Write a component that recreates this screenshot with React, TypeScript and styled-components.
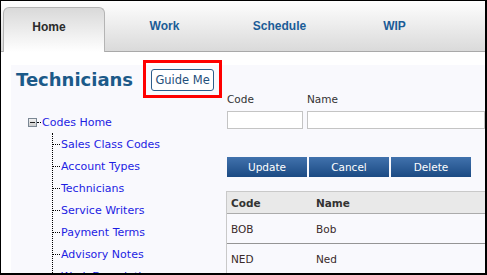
import styled, { createGlobalStyle } from "styled-components";

const GlobalStyle = createGlobalStyle`
  html, body {
    margin: 0;
    padding: 0;
    background: #fff;
  }
  body {
    font-family: "DejaVu Sans", Verdana, sans-serif;
  }
`;

const tabs = ["Home", "Work", "Schedule", "WIP"];

const codeLinks = [
  "Sales Class Codes",
  "Account Types",
  "Technicians",
  "Service Writers",
  "Payment Terms",
  "Advisory Notes",
  "Work Description",
  "Labor Rates",
];

const rows = [
  { code: "BOB", name: "Bob" },
  { code: "NED", name: "Ned" },
];

function ExpandBox() {
  return (
    <svg width="9" height="9" viewBox="0 0 9 9">
      <defs>
        <linearGradient id="eb" x1="0" y1="0" x2="0" y2="1">
          <stop offset="0" stopColor="#f4f4f4" />
          <stop offset="1" stopColor="#c9c9c9" />
        </linearGradient>
      </defs>
      <rect x="0.5" y="0.5" width="8" height="8" fill="url(#eb)" stroke="#7b8794" />
      <rect x="2" y="4" width="5" height="1" fill="#222" />
    </svg>
  );
}

function App() {
  return (
    <>
      <GlobalStyle />
      <Frame>
        <TabBar>
          {tabs.map((t, i) => (
            <Tab key={t} $active={i === 0}>
              {t}
            </Tab>
          ))}
        </TabBar>
        <Content>
          <Panel>
            <LeftCol>
              <TitleRow>
                <Title>Technicians</Title>
                <GuideWrap>
                  <GuideButton>Guide Me</GuideButton>
                </GuideWrap>
              </TitleRow>
              <Tree>
                <RootRow>
                  <ExpandBox />
                  <Connector />
                  <TreeLink>Codes Home</TreeLink>
                </RootRow>
                <Children>
                  {codeLinks.map((l) => (
                    <ChildRow key={l}>
                      <TreeLink>{l}</TreeLink>
                    </ChildRow>
                  ))}
                </Children>
              </Tree>
            </LeftCol>
            <RightCol>
              <FieldGrid>
                <Label>Code</Label>
                <Label>Name</Label>
                <Input />
                <Input />
              </FieldGrid>
              <ButtonRow>
                <ActionButton>Update</ActionButton>
                <ActionButton>Cancel</ActionButton>
                <ActionButton>Delete</ActionButton>
              </ButtonRow>
              <Table>
                <HeaderRow>
                  <HeadCell>Code</HeadCell>
                  <HeadCell>Name</HeadCell>
                </HeaderRow>
                {rows.map((r) => (
                  <BodyRow key={r.code}>
                    <Cell>{r.code}</Cell>
                    <Cell>{r.name}</Cell>
                  </BodyRow>
                ))}
              </Table>
            </RightCol>
          </Panel>
        </Content>
      </Frame>
    </>
  );
}

const Frame = styled.div`
  width: 487px;
  height: 275px;
  box-sizing: border-box;
  border-style: solid;
  border-color: #000;
  border-width: 1px 2px 2px 1px;
  display: flex;
  flex-direction: column;
  overflow: hidden;
`;

const TabBar = styled.div`
  height: 50px;
  flex: none;
  display: flex;
  align-items: flex-end;
  padding-left: 2px;
  border-bottom: 1px solid #a9a9a9;
  background: linear-gradient(#fefefe, #dadada);
`;

const Tab = styled.div<{ $active?: boolean }>`
  box-sizing: border-box;
  height: ${(p) => (p.$active ? "45px" : "44px")};
  width: ${(p) => (p.$active ? "102px" : "115px")};
  margin-right: ${(p) => (p.$active ? "2px" : "0")};
  margin-bottom: ${(p) => (p.$active ? "-1px" : "0")};
  padding-right: ${(p) => (p.$active ? "10px" : "0")};
  line-height: 38px;
  text-align: center;
  font-family: "Liberation Sans", Arial, sans-serif;
  font-weight: bold;
  font-size: 12px;
  color: ${(p) => (p.$active ? "#2b2b2b" : "#1b5c97")};
  border: ${(p) => (p.$active ? "1px solid #b4b4b4" : "none")};
  border-bottom: none;
  border-radius: 6px 6px 0 0;
  background: ${(p) =>
    p.$active ? "linear-gradient(#d9d9d9, #ffffff)" : "transparent"};
`;

const Content = styled.div`
  flex: 1;
  min-height: 0;
  padding: 13px 0 0 10px;
  background: #fff;
`;

const Panel = styled.div`
  height: 100%;
  background: #f9f9fd;
  display: grid;
  grid-template-columns: 216px 1fr;
`;

const LeftCol = styled.div`
  padding: 4px 0 0 5px;
`;

const TitleRow = styled.div`
  display: flex;
  align-items: center;
  gap: 18px;
  height: 22px;
`;

const Title = styled.h1`
  margin: 0;
  font-size: 18px;
  line-height: 22px;
  font-weight: bold;
  color: #1c5a89;
  white-space: nowrap;
`;

const GuideWrap = styled.span`
  position: relative;
  display: inline-flex;

  &::after {
    content: "";
    position: absolute;
    top: -9px;
    left: -8px;
    right: -8px;
    bottom: -7px;
    border: 3px solid #f00;
    pointer-events: none;
  }
`;

const GuideButton = styled.button`
  box-sizing: border-box;
  width: 63px;
  height: 22px;
  padding: 0;
  border: 1px solid #2d5e8b;
  border-radius: 3px;
  background: #fff;
  color: #1f4f7b;
  font-family: "DejaVu Sans", Verdana, sans-serif;
  font-size: 11.5px;
`;

const Tree = styled.div`
  margin-top: 20px;
  padding-left: 12px;
  font-size: 11px;
`;

const RootRow = styled.div`
  display: flex;
  align-items: center;
  height: 22px;
`;

const Connector = styled.span`
  width: 4px;
  border-top: 1px dotted #000;
  margin-right: 1px;
`;

const TreeLink = styled.span`
  color: #1d1de3;
  white-space: nowrap;
`;

const Children = styled.div`
  margin-left: 24px;
  border-left: 1px dotted #000;
`;

const ChildRow = styled.div`
  display: flex;
  align-items: center;
  height: 22px;

  &::before {
    content: "";
    width: 7px;
    border-top: 1px dotted #000;
    margin-right: 1px;
  }
`;

const RightCol = styled.div`
  padding-top: 28px;
  font-size: 10.5px;
  color: #333;
`;

const FieldGrid = styled.div`
  display: grid;
  grid-template-columns: 76px 178px;
  column-gap: 4px;
  row-gap: 5px;
`;

const Label = styled.div`
  line-height: 13px;
`;

const Input = styled.div`
  box-sizing: border-box;
  height: 18px;
  background: #fff;
  border: 1px solid #c4c4c4;
`;

const ButtonRow = styled.div`
  display: flex;
  gap: 2px;
  margin-top: 28px;
`;

const ActionButton = styled.button`
  width: 80px;
  height: 20px;
  padding: 0;
  border: none;
  background: linear-gradient(#4172ad, #1b4a83);
  color: #fff;
  font-family: "DejaVu Sans", Verdana, sans-serif;
  font-size: 10.5px;
`;

const Table = styled.div`
  margin: 14px 0 0 -1px;
  border-left: 1px solid #c9c9c9;
  border-top: 1px solid #c9c9c9;
`;

const HeaderRow = styled.div`
  display: grid;
  grid-template-columns: 85px 1fr;
  height: 21px;
  align-items: center;
  background: #e9e9e9;
  border-bottom: 1px solid #ababab;
`;

const HeadCell = styled.div`
  padding-left: 4px;
  font-weight: bold;
  color: #333;
`;

const BodyRow = styled.div`
  display: grid;
  grid-template-columns: 85px 1fr;
  height: 29px;
  align-items: center;
  border-bottom: 1px solid #959595;
`;

const Cell = styled.div`
  padding-left: 4px;
  color: #3a2a2a;
`;

export default App;
